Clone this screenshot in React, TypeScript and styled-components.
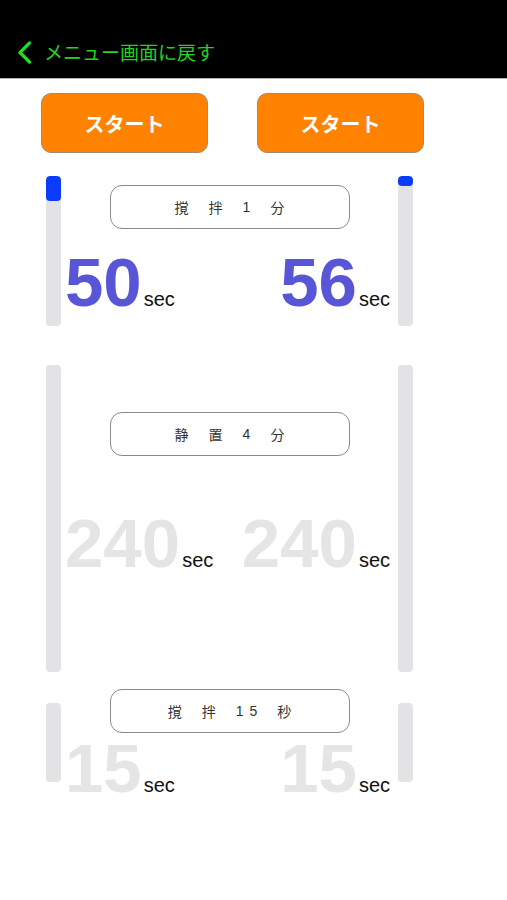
// Dependencies
import React from 'react'
import styled, { createGlobalStyle } from 'styled-components'

// Data
type Phase = {
  label: string[]
  total: number
  values: [number, number]
  active: boolean
  gapTop: number
  barTop: number
  barHeight: number
  labelTop: number
  numbersTop: number
}

const phases: Phase[] = [
  { label: ['撹', '拌', '1', '分'], total: 60, values: [50, 56], active: true, gapTop: 23, barTop: 0, barHeight: 150, labelTop: 9, numbersTop: 19 },
  { label: ['静', '置', '4', '分'], total: 240, values: [240, 240], active: false, gapTop: 39, barTop: 0, barHeight: 307, labelTop: 47, numbersTop: 53 },
  { label: ['撹', '拌', '15', '秒'], total: 15, values: [15, 15], active: false, gapTop: 17, barTop: 14, barHeight: 79, labelTop: 0, numbersTop: 1 },
]

const Bar = ({ phase, value }: { phase: Phase; value: number }) => (
  <Track $top={phase.barTop} $height={phase.barHeight}>
    {phase.active && (
      <Fill style={{ height: ((phase.total - value) / phase.total) * phase.barHeight }} />
    )}
  </Track>
)

// Page
export default () => (
  <>
    <GlobalStyle />
    <Header>
      <Back>
        <svg width="15" height="23" viewBox="0 0 15 23">
          <polyline points="12.5,2 3,11.5 12.5,21" fill="none" stroke="#22dd22" strokeWidth="3.2" strokeLinecap="round" strokeLinejoin="round" />
        </svg>
        <BackText>メニュー画面に戻す</BackText>
      </Back>
    </Header>

    <Buttons>
      <StartButton>スタート</StartButton>
      <StartButton>スタート</StartButton>
    </Buttons>

    {phases.map((phase, i) => (
      <Section key={i} $gap={phase.gapTop}>
        <Bar phase={phase} value={phase.values[0]} />
        <Middle $top={phase.labelTop}>
          <Label>
            {phase.label.map((t, j) => (
              <Token key={j} $digits={/\d/.test(t)}>{t}</Token>
            ))}
          </Label>
          <Readouts $top={phase.numbersTop}>
            <Readout>
              <Num $active={phase.active}>{phase.values[0]}</Num>
              <Unit>sec</Unit>
            </Readout>
            <Readout $right>
              <Num $active={phase.active}>{phase.values[1]}</Num>
              <Unit>sec</Unit>
            </Readout>
          </Readouts>
        </Middle>
        <Bar phase={phase} value={phase.values[1]} />
      </Section>
    ))}
  </>
)

// Styled Components
const GlobalStyle = createGlobalStyle`
  body {
    margin: 0;
    background: #ffffff;
    font-family: "Liberation Sans", "Noto Sans CJK JP", sans-serif;
  }
`

const Header = styled.header`
  height: 78px;
  background: #000000;
  border-bottom: 1px solid #b4b4b4;
  padding: 40px 0 0 17px;
  box-sizing: content-box;
  box-sizing: border-box;
  height: 79px;
`

const Back = styled.div`
  display: flex;
  align-items: center;
  gap: 12px;
  height: 24px;
`

const BackText = styled.span`
  font-family: "Noto Sans CJK JP", sans-serif;
  font-size: 19px;
  color: #22d322;
  line-height: 24px;
`

const Buttons = styled.div`
  display: flex;
  gap: 49px;
  padding: 14px 0 0 41px;
`

const StartButton = styled.button`
  width: 167px;
  height: 60px;
  background: #ff8300;
  border: 1px solid #a08a74;
  border-radius: 10px;
  color: #ffffff;
  font-family: "Noto Sans CJK JP", sans-serif;
  font-weight: 700;
  font-size: 20px;
  padding: 0;
  cursor: pointer;
`

const Section = styled.section<{ $gap: number }>`
  display: grid;
  grid-template-columns: 15px 337px 15px;
  align-items: start;
  margin: ${p => p.$gap}px 0 0 46px;
`

const Track = styled.div<{ $top: number; $height: number }>`
  margin-top: ${p => p.$top}px;
  height: ${p => p.$height}px;
  background: #e3e3e5;
  border-radius: 4px;
  overflow: hidden;
`

const Fill = styled.div`
  background: #0a3cff;
  border-radius: 4px;
`

const Middle = styled.div<{ $top: number }>`
  display: flex;
  flex-direction: column;
  padding-top: ${p => p.$top}px;
`

const Label = styled.div`
  align-self: center;
  width: 240px;
  height: 44px;
  box-sizing: border-box;
  border: 1px solid #8a8a8a;
  border-radius: 12px;
  display: flex;
  align-items: center;
  justify-content: center;
  gap: 20px;
  font-size: 14px;
  color: #333333;
`

const Token = styled.span<{ $digits: boolean }>`
  letter-spacing: ${p => (p.$digits ? '6px' : '0')};
  margin-right: ${p => (p.$digits ? '-6px' : '0')};
`

const Readouts = styled.div<{ $top: number }>`
  display: grid;
  grid-template-columns: 1fr 1fr;
  margin-top: ${p => p.$top}px;
`

const Readout = styled.div<{ $right?: boolean }>`
  display: flex;
  align-items: baseline;
  justify-content: ${p => (p.$right ? 'flex-end' : 'flex-start')};
  padding: ${p => (p.$right ? '0 8px 0 0' : '0 0 0 4px')};
`

const Num = styled.span<{ $active: boolean }>`
  font-size: 69px;
  font-weight: 700;
  line-height: 1;
  color: ${p => (p.$active ? '#5856d6' : '#e5e5e5')};
`

const Unit = styled.span`
  font-size: 20px;
  line-height: 1;
  color: #111111;
  margin-left: 2px;
`
